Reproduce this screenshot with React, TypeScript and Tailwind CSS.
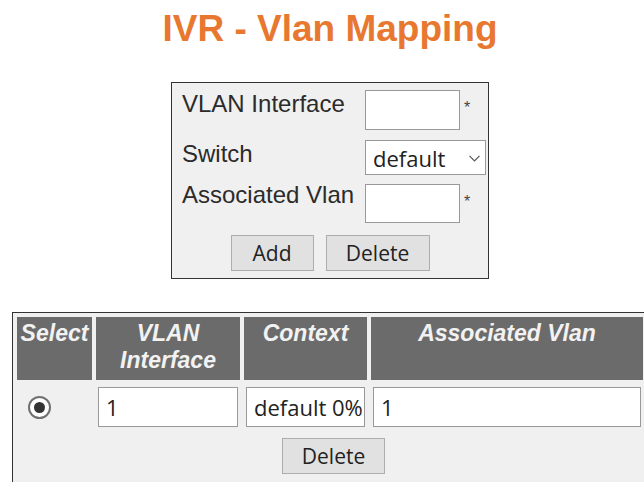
import { ChangeEvent } from 'react';

const inputFont = "font-['Open_Sans','DejaVu_Sans',sans-serif]";

function Star() {
    return <span className="ml-[4px] mt-[10px] text-[16px] leading-[16px] text-[#444]">*</span>;
}

function Button({ label, width }: { label: string; width: string }) {
    return (
        <button
            type="button"
            className={`${width} h-[36px] border border-[#adadad] bg-[#e1e1e1] text-[21px] leading-[28px] text-[#222] ${inputFont}`}
        >
            {label}
        </button>
    );
}

function Radio() {
    return (
        <span className="w-[23px] h-[23px] rounded-full border-2 border-[#707070] bg-white flex items-center justify-center">
            <span className="w-[11px] h-[11px] rounded-full bg-[#333]" />
        </span>
    );
}

export default function App() {
    const noop = (_e: ChangeEvent<HTMLInputElement>) => {};

    return (
        <div className="w-[644px] h-[482px] overflow-hidden bg-white">
            <div className="w-[660px] flex flex-col items-center font-['Liberation_Sans',Arial,sans-serif]">
                <h1 className="mt-[8px] text-[37px] leading-[42px] font-bold text-[#e8782f]">IVR - Vlan Mapping</h1>

                {/* Add / delete form */}
                <div className="mt-[32px] w-[318px] h-[197px] border border-[#333] bg-[#f0f0f0] pt-[7px]">
                    <div className="flex items-start pl-[10px] h-[40px]">
                        <span className="w-[183px] text-[24px] leading-[28px] text-[#2b2b2b]">VLAN Interface</span>
                        <input readOnly className="w-[95px] h-[40px] border border-[#999] bg-white outline-none" />
                        <Star />
                    </div>
                    <div className="flex items-start pl-[10px] mt-[10px] h-[35px]">
                        <span className="w-[183px] text-[24px] leading-[28px] text-[#2b2b2b]">Switch</span>
                        <div className="relative w-[121px] h-[35px]">
                            <select
                                defaultValue="default"
                                className={`appearance-none w-full h-full border border-[#999] bg-white pl-[7px] text-[22px] leading-[28px] text-[#222] outline-none ${inputFont}`}
                            >
                                <option>default</option>
                            </select>
                            <svg className="absolute right-[6px] top-[15px] pointer-events-none" width="11" height="7" viewBox="0 0 11 7">
                                <path d="M0.5 0.8 L5.5 5.8 L10.5 0.8" fill="none" stroke="#555" strokeWidth="1.2" />
                            </svg>
                        </div>
                    </div>
                    <div className="flex items-start pl-[10px] mt-[9px] h-[39px]">
                        <span className="w-[183px] -mt-[3px] text-[24px] leading-[28px] text-[#2b2b2b] whitespace-nowrap">Associated Vlan</span>
                        <input readOnly className="w-[95px] h-[39px] border border-[#999] bg-white outline-none" />
                        <Star />
                    </div>
                    <div className="flex justify-center gap-[12px] mt-[12px]">
                        <Button label="Add" width="w-[83px]" />
                        <Button label="Delete" width="w-[104px]" />
                    </div>
                </div>

                {/* Mapping table */}
                <div className="mt-[33px] w-[636px] border border-[#333] bg-[#f0f0f0] p-[4px] grid grid-cols-[75px_144px_123px_1fr] gap-[4px]">
                    {['Select', 'VLAN\nInterface', 'Context', 'Associated Vlan'].map((h) => (
                        <div
                            key={h}
                            className="h-[63px] bg-[#6b6b6b] pt-[3px] text-center text-[23px] leading-[27px] font-bold italic text-[#f2f2f2] whitespace-pre-line"
                        >
                            {h}
                        </div>
                    ))}

                    <div className="flex items-center pl-[11px] py-[3px]">
                        <Radio />
                    </div>
                    {['1', 'default 0%', '1'].map((v, i) => (
                        <div key={i} className="py-[3px] pl-[2px] pr-[2px]">
                            <input
                                value={v}
                                onChange={noop}
                                className={`w-full min-w-0 h-[40px] border border-[#999] bg-white pl-[7px] pr-[2px] text-[22px] text-[#222] outline-none ${inputFont}`}
                            />
                        </div>
                    ))}

                    <div className="col-span-4 flex justify-center pl-[7px] pt-[4px] pb-[20px]">
                        <Button label="Delete" width="w-[103px]" />
                    </div>
                </div>
            </div>
        </div>
    );
}
